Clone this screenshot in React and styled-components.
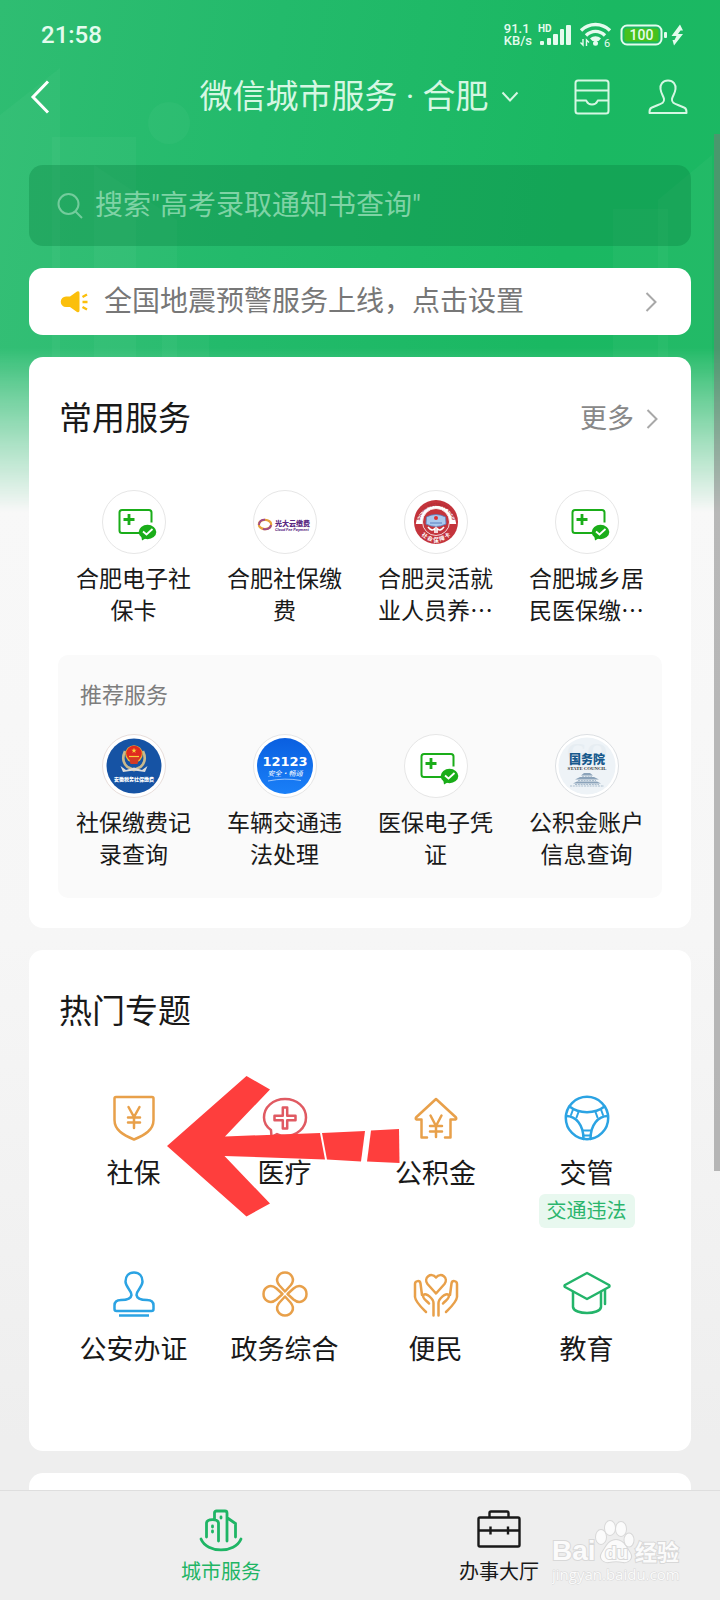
import React from 'react';
import styled, { createGlobalStyle } from 'styled-components';

const GlobalStyle = createGlobalStyle`
  * {
    box-sizing: border-box;
  }
  body {
    margin: 0;
    background-color: #eee;
    color: #191919;
    font-family: Roboto, 'Noto Sans CJK SC', sans-serif;
  }
  button {
    margin: 0;
    padding: 0;
    border: none;
    background: none;
    color: inherit;
    font-family: inherit;
    cursor: pointer;
  }
  svg {
    display: block;
    flex-shrink: 0;
  }
`;

const Screen = styled.div`
  position: relative;
  height: 100vh;
  display: flex;
  flex-direction: column;
  overflow: hidden;
`;

const Scroller = styled.div`
  flex: 1;
  min-height: 0;
  overflow-y: auto;
  scrollbar-width: none;
  display: grid;
  grid-template-columns: minmax(0, 1fr);
  background: linear-gradient(#f8f8f8 500px, #f6f6f6 940px, #eee 1440px);
`;

const Backdrop = styled.div`
  grid-area: 1 / 1;
  height: 512px;
  background: linear-gradient(100deg, #2fbd72 0%, #23ba6b 35%, #1ab862 75%, #1cb863 100%);
  mask-image: linear-gradient(#000 348px, rgba(0, 0, 0, 0.7) 392px, rgba(0, 0, 0, 0.35) 450px, transparent 512px);
`;

const Content = styled.div`
  grid-area: 1 / 1;
  z-index: 1;
`;

const ScrollThumb = styled.div`
  position: absolute;
  top: 134px;
  right: 0;
  width: 6px;
  height: 1037px;
  background-color: rgba(120, 120, 120, 0.5);
`;

const StatusBar = styled.div`
  height: 70px;
  padding: 0 36px 0 41px;
  display: flex;
  align-items: center;
  justify-content: space-between;
  color: #e4fbee;
`;

const Clock = styled.time`
  font-size: 24px;
  font-weight: 500;
`;

const StatusIcons = styled.div`
  display: flex;
  align-items: center;
  gap: 4px;
`;

const NetSpeed = styled.div`
  font-size: 13px;
  line-height: 12px;
  font-weight: 500;
`;

const NavBar = styled.header`
  height: 54px;
  padding: 0 32px 0 30px;
  display: grid;
  grid-template-columns: 1fr auto 1fr;
  align-items: center;
  color: #d5f7e3;
`;

const BackButton = styled.button`
  justify-self: start;
  color: #fff;
`;

const CityButton = styled.button`
  display: flex;
  align-items: center;
  gap: 12px;
`;

const PageTitle = styled.h1`
  margin: 0;
  font-size: 33px;
  line-height: 48px;
  font-weight: 400;
`;

const NavActions = styled.div`
  justify-self: end;
  display: flex;
  gap: 38px;
`;

const Main = styled.main`
  padding: 41px 29px 0;
  display: flex;
  flex-direction: column;
  gap: 22px;
`;

const SearchBox = styled.form`
  height: 81px;
  padding: 0 28px;
  display: flex;
  align-items: center;
  gap: 12px;
  border-radius: 14px;
  background-color: rgba(10, 130, 65, 0.34);
  color: #73cc9c;
`;

const SearchInput = styled.input`
  flex: 1;
  min-width: 0;
  padding: 0;
  border: none;
  outline: none;
  background: none;
  color: #fff;
  font-family: inherit;
  font-size: 28px;
  line-height: 40px;
  &::placeholder {
    color: #7fd3a5;
    opacity: 1;
  }
`;

const Notice = styled.a`
  height: 67px;
  padding: 0 34px 0 31px;
  display: flex;
  align-items: center;
  gap: 16px;
  border-radius: 14px;
  background-color: #fff;
  color: #777;
  font-size: 28px;
  line-height: 40px;
  text-decoration: none;
`;

const NoticeText = styled.span`
  flex: 1;
`;

const Card = styled.section`
  position: relative;
  padding: 38px 29px ${(props) => props.$bottom || 0}px;
  border-radius: 14px;
  background-color: #fff;
`;

const CardHead = styled.div`
  display: flex;
  align-items: center;
  justify-content: space-between;
`;

const CardTitle = styled.h2`
  margin: 0;
  padding-left: 1px;
  font-size: 33px;
  line-height: 48px;
  font-weight: 400;
`;

const MoreLink = styled.a`
  padding-right: 4px;
  display: flex;
  align-items: center;
  gap: 12px;
  color: #888;
  font-size: 27px;
  line-height: 40px;
  text-decoration: none;
`;

const ServiceGrid = styled.div`
  margin-top: ${(props) => props.$top}px;
  display: grid;
  grid-template-columns: repeat(4, minmax(0, 1fr));
`;

const Service = styled.button`
  display: flex;
  flex-direction: column;
  align-items: center;
  justify-content: flex-start;
  gap: 7px;
`;

const ServiceLabel = styled.span`
  width: 120px;
  min-height: 66px;
  font-family: 'Noto Sans CJK SC', sans-serif;
  font-size: 23px;
  line-height: 32px;
`;

const Recommend = styled.div`
  margin-top: 28px;
  padding: 25px 0 27px;
  border-radius: 10px;
  background-color: #fafafa;
`;

const RecommendTitle = styled.h3`
  margin: 0;
  padding-left: 22px;
  color: #7d7d7d;
  font-size: 22px;
  line-height: 32px;
  font-weight: 400;
`;

const TopicGrid = styled.div`
  margin-top: 58px;
  display: grid;
  grid-template-columns: repeat(4, minmax(0, 1fr));
  grid-auto-rows: 176px;
`;

const Topic = styled.button`
  display: flex;
  flex-direction: column;
  align-items: center;
  justify-content: flex-start;
`;

const TopicLabel = styled.span`
  margin-top: 12px;
  font-size: 27px;
  line-height: 40px;
`;

const TopicTag = styled.span`
  padding: 0 8px;
  border-radius: 6px;
  background-color: #e8f8ef;
  color: #2bb56d;
  font-size: 20px;
  line-height: 34px;
`;

const Pointer = styled.svg`
  position: absolute;
  top: 124px;
  left: 136px;
  pointer-events: none;
`;

const NextCard = styled(Card)`
  min-height: 120px;
`;

const TabBar = styled.nav`
  position: relative;
  height: 110px;
  display: flex;
  justify-content: space-evenly;
  border-top: 1px solid #dedede;
  background-color: #eee;
`;

const Tab = styled.a`
  width: 114px;
  padding-top: 17px;
  display: flex;
  flex-direction: column;
  align-items: center;
  gap: 6px;
  color: ${(props) => (props.$active ? '#1fb565' : '#191919')};
  font-size: 20px;
  line-height: 28px;
  text-decoration: none;
`;

const Watermark = styled.svg`
  position: absolute;
  right: 28px;
  bottom: 10px;
  pointer-events: none;
`;

const Chevron = () => (
  <svg width='12' height='20' viewBox='0 0 12 20' fill='none' stroke='#a8a8a8' strokeWidth='2'>
    <path d='M1.5 1 L10.5 10 L1.5 19' />
  </svg>
);

const StatusGlyphs = () => (
  <svg width='148' height='32' viewBox='536 19 148 32' fill='currentColor'>
    <text x='538' y='32' fontSize='10' fontWeight='700' fontFamily='Roboto'>HD</text>
    <rect x='540' y='41' width='4' height='4' rx='1' />
    <rect x='547' y='38' width='4' height='7' rx='1' />
    <rect x='553' y='34' width='5' height='11' rx='1' />
    <rect x='560' y='29' width='4' height='16' rx='1' />
    <rect x='566' y='25' width='5' height='20' rx='1' />
    <g fill='none' stroke='currentColor' strokeWidth='3.4'>
      <path d='M581 30.5 C589 22.5 602 22.5 610 30.5' />
      <path d='M586 35.5 C591.5 30 599.5 30 605 35.5' />
    </g>
    <path d='M590 38.5 C593.5 35.5 597.5 35.5 601 38.5 L598.5 41 L592.5 41 Z' />
    <circle cx='595.5' cy='43.2' r='2.5' />
    <path d='M583 39 V45 L580.5 42.5 M586.5 46 V40 L589 42.5' fill='none' stroke='currentColor' strokeWidth='1.4' />
    <text x='604' y='47' fontSize='11' fontFamily='Roboto'>6</text>
    <rect x='621.5' y='25.5' width='40' height='19' rx='5.5' fill='none' stroke='currentColor' strokeWidth='2' />
    <rect x='624.5' y='28.5' width='34' height='13' rx='2.5' fill='#47c11c' />
    <rect x='664' y='32' width='3' height='6' rx='1' />
    <text x='641.5' y='40' fontSize='14' fontWeight='500' fontFamily='Roboto' textAnchor='middle'>100</text>
    <path d='M680 24.5 L671.5 36 H676.5 L674.5 40 H672.5 L674 45.5 L683 34 H678 L680.5 30.5 H683 Z' />
  </svg>
);

const InboxIcon = () => (
  <svg width='36' height='36' viewBox='0 0 36 36' fill='none' stroke='currentColor' strokeWidth='2' strokeLinejoin='round'>
    <rect x='1.5' y='1.5' width='33' height='33' rx='2.5' />
    <path d='M1.5 11.5 H34.5 M1.5 21.5 H12 C13 21.5 12.5 25.5 18 25.5 C23.5 25.5 23 21.5 24 21.5 H34.5' />
  </svg>
);

const PersonIcon = () => (
  <svg width='40' height='36' viewBox='0 0 40 36' fill='none' stroke='currentColor' strokeWidth='2' strokeLinejoin='round'>
    <path d='M20 1.5 C14.5 1.5 12 5.5 12.5 10 C13 14.5 15.5 17 16 20 C16.5 23.5 14 24.5 10 26 L4 28.5 C1.5 29.5 1.5 31 1.5 34 H38.5 C38.5 31 38.5 29.5 36 28.5 L30 26 C26 24.5 23.5 23.5 24 20 C24.5 17 27 14.5 27.5 10 C28 5.5 25.5 1.5 20 1.5 Z' />
  </svg>
);

const HornIcon = () => (
  <svg width='28' height='24' viewBox='0 0 28 24' fill='#fbbf0c'>
    <path d='M10 6.5 L17 1.5 Q19.5 0.5 19.5 3 V20.5 Q19.5 23 17 22 L10 17 H6 A5.2 5.2 0 0 1 6 6.5 Z' />
    <path d='M22.5 7 L27 4.5 M22.5 12 H27.5 M22.5 17 L27 19.5' stroke='#fbbf0c' strokeWidth='2.4' />
  </svg>
);

const Logo = ({ children, ring = '#e6e6e6' }) => (
  <svg width='64' height='64' viewBox='0 0 64 64'>
    <circle cx='32' cy='32' r='31.5' fill='#fff' stroke={ring} />
    {children}
  </svg>
);

const InsuranceLogo = () => (
  <Logo>
    <path d='M38 43 H20 Q17.5 43 17.5 40.5 V22.5 Q17.5 20 20 20 H47 Q49.5 20 49.5 22.5 V32.5' fill='none' stroke='#1aad19' strokeWidth='2' />
    <path d='M27 24 V35 M21.5 29.5 H32.5' stroke='#1aad19' strokeWidth='2.8' />
    <ellipse cx='45.5' cy='42' rx='8.8' ry='7.2' fill='#1aad19' />
    <path d='M39 44 L40 50.5 L46 47 Z' fill='#1aad19' />
    <path d='M41 41.5 L44.5 44.5 L50.5 39' fill='none' stroke='#fff' strokeWidth='1.8' />
  </Logo>
);

const CloudPayLogo = () => (
  <Logo>
    <ellipse cx='12' cy='34.5' rx='6.2' ry='4.6' fill='none' stroke='#e8a33a' strokeWidth='2.2' />
    <path d='M6 35 C6 31 9 29.5 12 29.8 M18 35 C17.5 38.5 14 39.8 10 39' fill='none' stroke='#a04a8a' strokeWidth='2' />
    <text x='22' y='36' fontSize='7' fontWeight='900' fontFamily='Noto Sans CJK SC' fill='#5b2a83'>光大云缴费</text>
    <text x='22' y='40.5' fontSize='4' fontWeight='700' fontStyle='italic' fontFamily='Roboto' fill='#5b2a83'>Cloud Fee Payment</text>
  </Logo>
);

const SecurityCardLogo = () => (
  <Logo>
    <circle cx='32' cy='32' r='22' fill='#c4343c' />
    <path d='M11.8 34 A20.3 20.3 0 0 1 52.2 34 Z' fill='#fff' />
    <circle cx='32' cy='32' r='13.5' fill='#c4343c' stroke='#fff' strokeWidth='0.8' />
    <path d='M22.5 27 Q32 22 41.5 27 L42 34 Q32 39 22 34 Z' fill='#a9c9ee' stroke='#5a7fc0' strokeWidth='0.8' />
    <circle cx='32' cy='28' r='2' fill='#d33' />
    <path d='M26 33 H38' stroke='#5a7fc0' strokeWidth='1' />
    <path d='M24 37 Q28 42 31 38.5 V43 M40 37 Q36 42 33 38.5 V43' fill='none' stroke='#fff' strokeWidth='1.6' />
    <path id='card-arc-top' d='M16.9 38 A16.2 16.2 0 1 1 47.1 38' fill='none' />
    <path id='card-arc-bottom' d='M12.5 36 A20 20 0 0 0 51.5 36' fill='none' />
    <text fontSize='4.2' fontWeight='700' fontFamily='Roboto' fill='#b32b33'>
      <textPath href='#card-arc-top' startOffset='50%' textAnchor='middle'>SOCIAL SECURITY CARD</textPath>
    </text>
    <text fontSize='5.5' fontWeight='700' fontFamily='Noto Sans CJK SC' fill='#fff'>
      <textPath href='#card-arc-bottom' startOffset='50%' textAnchor='middle'>社 会 保 障 卡</textPath>
    </text>
  </Logo>
);

const TaxLogo = () => (
  <Logo ring='#e8dedb'>
    <circle cx='32' cy='32' r='27.5' fill='#1653a4' />
    <path d='M23 17 Q18.5 27 25.5 33 L32 36 L38.5 33 Q45.5 27 41 17' fill='none' stroke='#c9b98d' strokeWidth='2.6' />
    <path d='M18.5 32 L24 36 L32 33.5 L40 36 L45.5 32 L43 38 L32 36.5 L21 38 Z' fill='#dcdcdc' />
    <circle cx='32' cy='20' r='8.8' fill='#e9b53b' />
    <circle cx='32' cy='19.5' r='7.8' fill='#e02a1f' />
    <path d='M32 13.8 L32.7 15.8 H34.6 L33 17 L33.6 19 L32 17.8 L30.4 19 L31 17 L29.4 15.8 H31.3 Z' fill='#f7d33c' />
    <path d='M27 23.5 H37 L35.5 30 H28.5 Z' fill='#d33a26' />
    <path d='M27 22.5 H37' stroke='#f7d33c' strokeWidth='1.2' />
    <text x='32' y='46.5' fontSize='5' fontWeight='900' fontFamily='Noto Sans CJK SC' fill='#fff' textAnchor='middle'>安徽税务社保缴费</text>
  </Logo>
);

const TrafficLogo = () => (
  <Logo>
    <defs>
      <linearGradient id='traffic-blue' x1='0' y1='0' x2='0' y2='1'>
        <stop offset='0' stopColor='#0a5fe0' />
        <stop offset='1' stopColor='#1a80f8' />
      </linearGradient>
    </defs>
    <circle cx='32' cy='32' r='28' fill='url(#traffic-blue)' />
    <text x='32' y='32' fontSize='13' fontWeight='700' fontFamily='DejaVu Sans' fill='#fff' textAnchor='middle'>12123</text>
    <text x='32' y='42' fontSize='7' fontStyle='italic' fontFamily='Noto Sans CJK SC' fill='#fff' textAnchor='middle'>安全·畅通</text>
    <path d='M15 47 Q32 43.5 48 46.5' fill='none' stroke='#b9d8ff' strokeWidth='0.8' />
  </Logo>
);

const CouncilLogo = () => (
  <Logo ring='#dcdfe2'>
    <circle cx='32' cy='32' r='28.5' fill='#eef3f7' />
    <text x='32' y='27' fontSize='26' fontWeight='700' fontFamily='Liberation Serif' fill='#e6edf2' textAnchor='middle'>GO</text>
    <text x='32' y='30' fontSize='12' fontWeight='900' fontFamily='Noto Sans CJK SC' fill='#17598c' textAnchor='middle'>国务院</text>
    <text x='32' y='36' fontSize='4.8' fontWeight='700' fontFamily='Liberation Serif' fill='#333' textAnchor='middle'>STATE COUNCIL</text>
    <path d='M26 41.5 L29 39 H35 L38 41.5 Z M20 45.5 L25 43 H39 L44 45.5 Z M18 49.5 L22 47.5 H42 L46 49.5 Z' fill='#8ba3ba' />
    <path d='M27 42.3 H37 M23 46.5 H41 M20 50.5 H44 M15 52 H49' stroke='#a9bccd' strokeWidth='1' strokeDasharray='2 0.8' />
  </Logo>
);

const TopicIcon = ({ color, children }) => (
  <svg width='48' height='48' viewBox='0 0 48 48' fill='none' stroke={color} strokeWidth='2.5' strokeLinejoin='round' strokeLinecap='round'>
    {children}
  </svg>
);

const ShieldYuan = () => (
  <TopicIcon color='#e8a04a'>
    <path d='M6 3 H42 Q43.5 3 43.5 4.5 V26 C43.5 36 35 41 24 45.5 C13 41 4.5 36 4.5 26 V4.5 Q4.5 3 6 3 Z' />
    <path d='M18.5 13 L24 23 L29.5 13 M24 23 V34 M18 23.5 H30 M18 28.5 H30' />
  </TopicIcon>
);

const Medical = () => (
  <TopicIcon color='#e05a62'>
    <path d='M10 36 C5 32.5 3 28 3 23.5 C3 13 12 5 24 5 C36 5 45 13 45 23.5 C45 34 36 42 24 42 C21 42 18 41 16 40 L10.5 43 Z' />
    <path d='M21.8 13.5 H26.2 V21.8 H34.5 V26.2 H26.2 V34.5 H21.8 V26.2 H13.5 V21.8 H21.8 Z' />
  </TopicIcon>
);

const HouseYuan = () => (
  <TopicIcon color='#e8a04a'>
    <path d='M15 43.5 H9.5 V25.5 H4.5 Q3 24.5 4.5 23 L24 5 L43.5 23 Q45 24.5 43.5 25.5 H38.5 V43.5 H33' />
    <path d='M18.5 21.5 L24 32 L29.5 21.5 M24 32 V43 M18 32 H30 M18 37.5 H30' />
  </TopicIcon>
);

const Wheel = () => (
  <TopicIcon color='#2ba3e3'>
    <circle cx='24' cy='24' r='21.2' />
    <path d='M6.5 12.5 C16 20 32 20 41.5 12.5 M3 22 C13 22 20.5 31 20.5 45 M45 22 C35 22 27.5 31 27.5 45' />
    <path d='M10 15.5 L8 21 M15.5 18 L13.5 23.5 M38 15.5 L40 21 M32.5 18 L34.5 23.5 M20.5 36.5 H27.5 M20.5 41.5 H27.5' strokeWidth='2' />
  </TopicIcon>
);

const Stamp = () => (
  <TopicIcon color='#2ba3e3'>
    <path d='M24 2.5 C18.5 2.5 15.5 6.5 15.5 11.5 C15.5 17 21 19.5 21.5 25 C21 29 16 30 11 30 C6 30 4.5 32 4.5 35.5 V39 Q4.5 41 6.5 41 H41.5 Q43.5 41 43.5 39 V35.5 C43.5 32 42 30 37 30 C32 30 27 29 26.5 25 C27 19.5 32.5 17 32.5 11.5 C32.5 6.5 29.5 2.5 24 2.5 Z' />
    <path d='M9 45.5 H39' strokeLinecap='butt' />
  </TopicIcon>
);

const Clover = () => (
  <TopicIcon color='#e8a04a'>
    {[0, 90, 180, 270].map((deg) => (
      <path key={deg} transform={`rotate(${deg} 24 24)`} d='M24 21.5 L18.5 15.5 C13 9 18 2.5 24 2.5 C30 2.5 35 9 29.5 15.5 Z' />
    ))}
  </TopicIcon>
);

const HeartHands = () => (
  <TopicIcon color='#e8a04a'>
    <path d='M24 23.5 L15.5 14 C11 8 19 1.5 24 7.5 C29 1.5 37 8 32.5 14 Z' />
    {[1, -1].map((side) => (
      <path
        key={side}
        transform={side === 1 ? undefined : 'translate(48 0) scale(-1 1)'}
        d='M21.5 45.5 V33 C21.5 29 14 22 11.5 25 C9.5 28 14 30 17 33.5 M10 25 L8.5 13.5 C8 10 3 10.5 3 14 V27 C3.5 32 9 37 14 42'
      />
    ))}
  </TopicIcon>
);

const GradCap = () => (
  <TopicIcon color='#23b46a'>
    <path d='M24 3 L46 15 Q47 16 46 17 L24 29 L2 17 Q1 16 2 15 Z' />
    <path d='M10 22 V37 C11 45 37 45 38 37 V22 M42 20 V34' />
  </TopicIcon>
);

const CityIcon = () => (
  <svg width='44' height='44' viewBox='0 0 44 44' fill='none' stroke='currentColor' strokeWidth='2.8' strokeLinecap='round'>
    <path d='M2 31 C8 45.5 36 45.5 42 31' />
    <path d='M7.5 29 V15 C8 10.5 19 10.5 19.5 15 V33 M15.5 11 V5 Q15.5 3 17.5 3 H26 Q28 3 28 5 V33 M28.5 10 L36.5 15.5 V29' />
    <path d='M13.5 18 V19 M13.5 23 V24 M22 9 V10' />
  </svg>
);

const BriefcaseIcon = () => (
  <svg width='44' height='44' viewBox='0 0 44 44' fill='none' stroke='currentColor' strokeWidth='2.4' strokeLinejoin='round'>
    <rect x='1.5' y='9.5' width='41' height='29' rx='1.5' />
    <path d='M12.5 9 V5 Q12.5 3.5 14 3.5 H30 Q31.5 3.5 31.5 5 V9 M1.5 22.5 H42.5 M13.5 18.5 V26.5 M31 18.5 V26.5' />
  </svg>
);

const services = [
  { name: '合肥电子社保卡', Icon: InsuranceLogo },
  { name: '合肥社保缴费', Icon: CloudPayLogo },
  { name: '合肥灵活就业人员养…', Icon: SecurityCardLogo },
  { name: '合肥城乡居民医保缴…', Icon: InsuranceLogo },
];

const recommended = [
  { name: '社保缴费记录查询', Icon: TaxLogo },
  { name: '车辆交通违法处理', Icon: TrafficLogo },
  { name: '医保电子凭证', Icon: InsuranceLogo },
  { name: '公积金账户信息查询', Icon: CouncilLogo },
];

const topics = [
  { name: '社保', Icon: ShieldYuan },
  { name: '医疗', Icon: Medical },
  { name: '公积金', Icon: HouseYuan },
  { name: '交管', Icon: Wheel, tag: '交通违法' },
  { name: '公安办证', Icon: Stamp },
  { name: '政务综合', Icon: Clover },
  { name: '便民', Icon: HeartHands },
  { name: '教育', Icon: GradCap },
];

const ServiceList = ({ items, top }) => (
  <ServiceGrid $top={top}>
    {items.map(({ name, Icon }) => (
      <Service key={name} type='button'>
        <Icon />
        <ServiceLabel>{name}</ServiceLabel>
      </Service>
    ))}
  </ServiceGrid>
);

const Skyline = () => (
  <svg width='100%' height='512' fill='#fff'>
    <g fillOpacity='0.03'>
      <path d='M0 115 L60 68 V512 H0 Z' />
      <rect x='52' y='137' width='84' height='375' />
      <path d='M94 165 L177 220 V512 H94 Z' />
      <rect x='162' y='330' width='47' height='182' />
      <circle cx='169' cy='123' r='21' />
    </g>
    <svg x='100%' overflow='visible' fillOpacity='0.03'>
      <rect x='-107' y='209' width='55' height='303' />
      <path d='M-62 200 L-8 155 V512 H-62 Z' />
    </svg>
  </svg>
);

const App = () => {
  return (
    <Screen>
      <GlobalStyle />
      <Scroller>
        <Backdrop>
          <Skyline />
        </Backdrop>
        <Content>
          <StatusBar>
            <Clock>21:58</Clock>
            <StatusIcons>
              <NetSpeed>
                91.1
                <br />
                KB/s
              </NetSpeed>
              <StatusGlyphs />
            </StatusIcons>
          </StatusBar>
          <NavBar>
            <BackButton type='button' aria-label='返回'>
              <svg width='20' height='34' viewBox='0 0 20 34' fill='none' stroke='currentColor' strokeWidth='3'>
                <path d='M18 1.5 L3 17 L18 32.5' />
              </svg>
            </BackButton>
            <CityButton type='button'>
              <PageTitle>微信城市服务 · 合肥</PageTitle>
              <svg width='18' height='12' viewBox='0 0 18 12' fill='none' stroke='currentColor' strokeWidth='2'>
                <path d='M1.5 1.5 L9 9.5 L16.5 1.5' />
              </svg>
            </CityButton>
            <NavActions>
              <button type='button' aria-label='收件箱'>
                <InboxIcon />
              </button>
              <button type='button' aria-label='我的'>
                <PersonIcon />
              </button>
            </NavActions>
          </NavBar>
          <Main>
            <SearchBox>
              <svg width='26' height='28' viewBox='0 0 26 28' fill='none' stroke='currentColor' strokeWidth='2'>
                <circle cx='11.5' cy='12' r='10' />
                <path d='M18.5 19.5 L25 26' />
              </svg>
              <SearchInput type='search' aria-label='搜索' placeholder={'搜索"高考录取通知书查询"'} />
            </SearchBox>
            <Notice href='#notice'>
              <HornIcon />
              <NoticeText>全国地震预警服务上线，点击设置</NoticeText>
              <Chevron />
            </Notice>
            <Card $bottom={30}>
              <CardHead>
                <CardTitle>常用服务</CardTitle>
                <MoreLink href='#more'>
                  更多
                  <Chevron />
                </MoreLink>
              </CardHead>
              <ServiceList items={services} top={47} />
              <Recommend>
                <RecommendTitle>推荐服务</RecommendTitle>
                <ServiceList items={recommended} top={22} />
              </Recommend>
            </Card>
            <Card $bottom={5}>
              <CardTitle>热门专题</CardTitle>
              <TopicGrid>
                {topics.map(({ name, Icon, tag }) => (
                  <Topic key={name} type='button'>
                    <Icon />
                    <TopicLabel>{name}</TopicLabel>
                    {tag && <TopicTag>{tag}</TopicTag>}
                  </Topic>
                ))}
              </TopicGrid>
              <Pointer width='240' height='146' viewBox='165 1074 240 146' fill='#fe3e3d'>
                <path d='M167 1146 L246.5 1076 L270 1089.5 L225 1136.5 L320 1133 L325 1159.5 L224.5 1156 L270 1203.5 L246.5 1216.5 Z' />
                <path d='M322 1133 L365 1131 L361 1161.5 L327 1159.5 Z' />
                <path d='M371 1130.5 L399 1129 L399.5 1163 L367 1161.5 Z' />
              </Pointer>
            </Card>
            <NextCard />
          </Main>
        </Content>
      </Scroller>
      <ScrollThumb />
      <TabBar>
        <Tab href='#city' $active>
          <CityIcon />
          城市服务
        </Tab>
        <Tab href='#hall'>
          <BriefcaseIcon />
          办事大厅
        </Tab>
        <Watermark width='140' height='70' viewBox='0 0 140 70' fill='#fbfbfb' stroke='#d8d8d8' strokeWidth='2' paintOrder='stroke'>
          <text x='0' y='40' fontSize='28' fontWeight='700' fontFamily='Liberation Sans'>Bai</text>
          <path d='M64 20 C72 20 75 29 78 33 C81 38 77 43 71 42 C66 41 62 41 57 42 C51 43 47 38 50 33 C53 29 56 20 64 20 Z' />
          <ellipse cx='49' cy='17' rx='5' ry='7' />
          <ellipse cx='58' cy='8' rx='5' ry='7' />
          <ellipse cx='69' cy='9' rx='5' ry='7' />
          <ellipse cx='77' cy='20' rx='4.5' ry='6.5' />
          <text x='53' y='39' fontSize='19' fontWeight='700' fontFamily='Liberation Sans'>du</text>
          <text x='83' y='40' fontSize='22' fontWeight='700' fontFamily='Noto Sans CJK SC'>经验</text>
          <text x='0' y='60' fontSize='15' fontFamily='Open Sans' strokeWidth='1'>jingyan.baidu.com</text>
        </Watermark>
      </TabBar>
    </Screen>
  );
};

export default App;
